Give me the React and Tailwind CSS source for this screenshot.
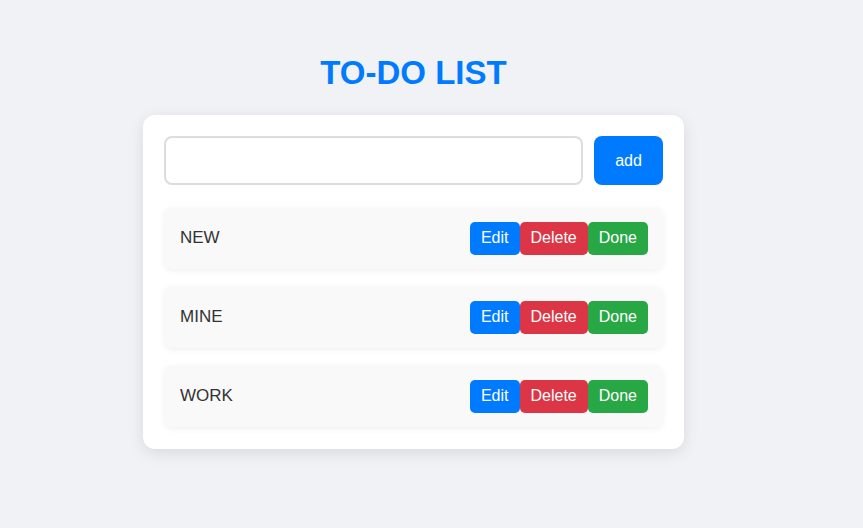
const TODOS = ['NEW', 'MINE', 'WORK'];

export default function App() {
  return (
    <div className="min-h-screen bg-[#f0f2f5] pt-[54px] font-['Liberation_Sans',Arial,sans-serif]">
      <div className="w-[541px] ml-[143px]">
        <h1 className="text-[33px] leading-[38px] font-bold text-center text-[#007bff] mb-[23px]">TO-DO LIST</h1>
        <div className="bg-white rounded-[12px] px-[21px] pt-[21px] pb-[22px] shadow-[0_4px_16px_rgba(0,0,0,0.1)]">
          <div className="flex gap-[11px]">
            <input
              type="text"
              className="flex-1 h-[49px] border-2 border-[#ddd] rounded-[8px] px-3 text-[16px] outline-none"
            />
            <button className="w-[69px] h-[49px] bg-[#007bff] text-white text-[16px] rounded-[8px]">add</button>
          </div>
          <ul className="mt-[22px] flex flex-col gap-[17px]">
            {TODOS.map(item => (
              <li
                key={item}
                className="flex items-center justify-between h-[62px] pl-[16px] pr-[15px] bg-[#f9f9f9] rounded-[8px] shadow-[0_2px_6px_rgba(0,0,0,0.06)]"
              >
                <span className="text-[17px] text-[#333]">{item}</span>
                <div className="flex">
                  <button className="h-[33px] px-[11px] bg-[#007bff] text-white text-[16px] rounded-[5px]">Edit</button>
                  <button className="h-[33px] px-[11px] bg-[#dc3545] text-white text-[16px] rounded-[5px]">Delete</button>
                  <button className="h-[33px] px-[11px] bg-[#28a745] text-white text-[16px] rounded-[5px]">Done</button>
                </div>
              </li>
            ))}
          </ul>
        </div>
      </div>
    </div>
  );
}
